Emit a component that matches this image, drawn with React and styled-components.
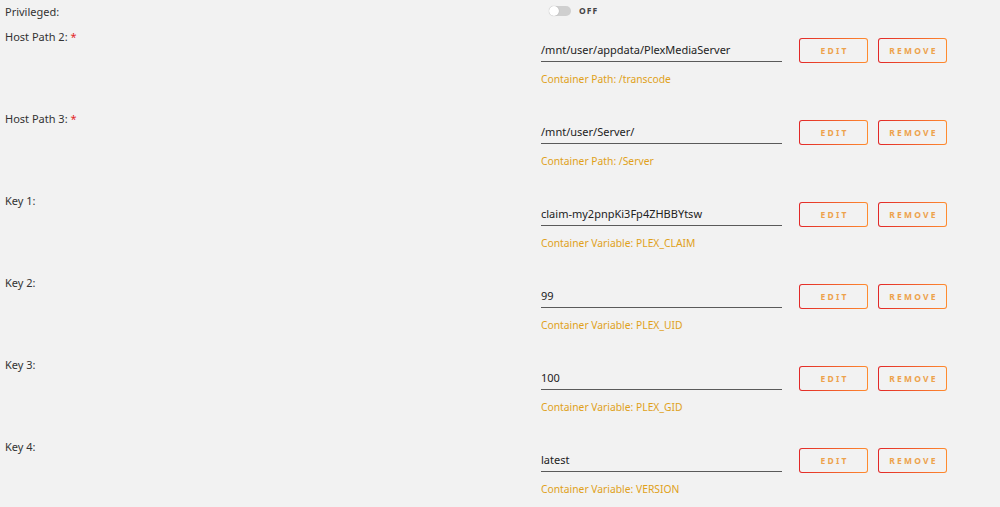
import React from 'react'
import styled, { createGlobalStyle } from 'styled-components'

const GlobalStyle = createGlobalStyle`
  body {
    margin: 0;
    background: #f2f2f2;
    font-family: 'Noto Sans', 'Open Sans', sans-serif;
    color: #333;
  }
`

const Root = styled.div`
  padding-top: 0;
`

const Row = styled.div`
  display: grid;
  grid-template-columns: 541px 241px auto;
  align-items: start;
  height: ${(p) => p.$height}px;
`

const Label = styled.div`
  padding-left: 5px;
  padding-top: ${(p) => p.$top}px;
  font-size: 11px;
  line-height: 14px;
  color: #333;
`

const Star = styled.span`
  color: #e22828;
  margin-left: 3px;
`

const Field = styled.div`
  display: flex;
  flex-direction: column;
  padding-top: 8px;
`

const Value = styled.div`
  height: 23px;
  border-bottom: 1px solid #5a5a5a;
  font-size: 11px;
  line-height: 23px;
  color: #222;
`

const Hint = styled.div`
  margin-top: 10px;
  font-size: 10.3px;
  line-height: 14px;
  color: #e0a11a;
`

const Actions = styled.div`
  display: flex;
  gap: 10px;
  padding-top: 8px;
  padding-left: 17px;
  align-items: flex-start;
`

const Button = styled.button`
  width: 69px;
  height: 25px;
  box-sizing: border-box;
  border: 1.5px solid transparent;
  border-radius: 3px;
  background:
    linear-gradient(#f2f2f2, #f2f2f2) padding-box,
    linear-gradient(90deg, #e22828, #ff8c2f) border-box;
  font-family: 'Noto Sans', sans-serif;
  font-size: 8.5px;
  font-weight: 700;
  letter-spacing: 2.2px;
  color: #eda24c;
  padding: 0 0 0 2px;
  cursor: pointer;
`

const ToggleWrap = styled.div`
  display: flex;
  align-items: center;
  gap: 8px;
  padding-top: 5px;
  padding-left: 8px;
`

const Switch = styled.div`
  position: relative;
  width: 22px;
  height: 10px;
  border-radius: 5px;
  background: #cfcfcf;
  &::after {
    content: '';
    position: absolute;
    left: 0;
    top: 0;
    width: 10px;
    height: 10px;
    border-radius: 50%;
    background: #fff;
    box-shadow: 0 0 1px rgba(0, 0, 0, 0.3);
  }
`

const SwitchText = styled.span`
  font-size: 8.5px;
  font-weight: 700;
  letter-spacing: 1px;
  color: #444;
`

const rows = [
  { label: 'Host Path 2:', req: true, value: '/mnt/user/appdata/PlexMediaServer', hint: 'Container Path: /transcode' },
  { label: 'Host Path 3:', req: true, value: '/mnt/user/Server/', hint: 'Container Path: /Server' },
  { label: 'Key 1:', value: 'claim-my2pnpKi3Fp4ZHBBYtsw', hint: 'Container Variable: PLEX_CLAIM' },
  { label: 'Key 2:', value: '99', hint: 'Container Variable: PLEX_UID' },
  { label: 'Key 3:', value: '100', hint: 'Container Variable: PLEX_GID' },
  { label: 'Key 4:', value: 'latest', hint: 'Container Variable: VERSION' },
]

export default function App() {
  return (
    <Root>
      <GlobalStyle />
      <Row $height={30}>
        <Label $top={5}>Privileged:</Label>
        <ToggleWrap>
          <Switch />
          <SwitchText>OFF</SwitchText>
        </ToggleWrap>
      </Row>
      {rows.map((r) => (
        <Row key={r.label} $height={82}>
          <Label $top={0}>
            {r.label}
            {r.req && <Star>*</Star>}
          </Label>
          <Field>
            <Value>{r.value}</Value>
            <Hint>{r.hint}</Hint>
          </Field>
          <Actions>
            <Button>EDIT</Button>
            <Button>REMOVE</Button>
          </Actions>
        </Row>
      ))}
    </Root>
  )
}
